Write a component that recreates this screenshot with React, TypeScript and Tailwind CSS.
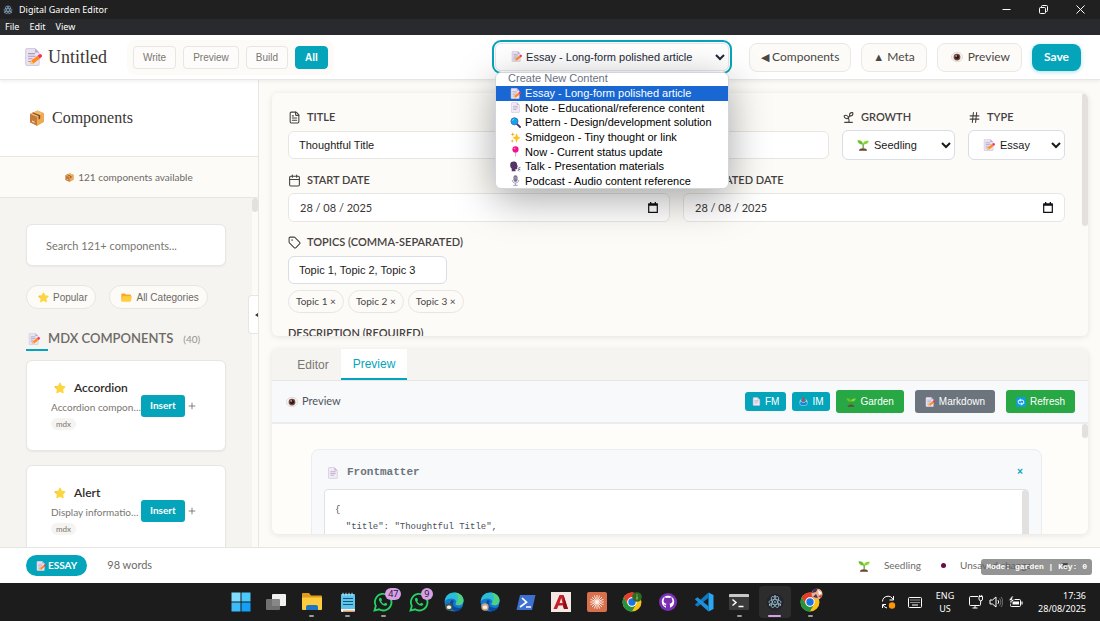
import { useState } from 'react';
import type { ReactNode } from 'react';
import { Calendar, FileText, Hash, Plus, Sprout, Tag } from 'lucide-react';

type IconProps = { className?: string };

const svgProps = { viewBox: '0 0 16 16', fill: 'none', 'aria-hidden': true } as const;

/* ---------- emoji style icons ---------- */

const Memo = ({ className = 'size-3' }: IconProps) => (
  <svg {...svgProps} className={className}>
    <path d="M2.5.5h7.3L13.5 4v10.5a1 1 0 0 1-1 1h-10a1 1 0 0 1-1-1v-13a1 1 0 0 1 1-1z" fill="#e9e3f1" stroke="#c9bdd6" strokeWidth=".7" />
    <path d="M9.8.5V4h3.7z" fill="#b9a9c9" />
    <path d="M3.7 5h6M3.7 7.3h6.5M3.7 9.6h4M3.7 11.9h3" stroke="#a998bb" strokeWidth=".9" />
    <path d="M5.6 14.2l.9-3 5.6-4.4 2 2.5-5.6 4.5z" fill="#ff8a1e" />
    <path d="M5.6 14.2l.9-3 2 2.6z" fill="#ffce7c" />
    <path d="M12.1 6.8l1.3-1a1.5 1.5 0 0 1 2 2.4l-1.3 1.1z" fill="#f8315f" />
  </svg>
);

const Page = ({ className = 'size-3' }: IconProps) => (
  <svg {...svgProps} className={className}>
    <path d="M3 .7h6.8L13.8 4.500v9.800a1 1 0 0 1-1 1H3a1 1 0 0 1-1-1V1.700a1 1 0 0 1 1-1z" fill="#f0eaf5" stroke="#cdbfd8" strokeWidth=".8" />
    <path d="M9.800.7v3.800h4z" fill="#c6b5d3" />
    <path d="M4.500 6.300h7M4.500 8.600h7M4.500 10.900h5" stroke="#b49fc4" strokeWidth="1" />
  </svg>
);

const Box = ({ className = 'size-3' }: IconProps) => (
  <svg {...svgProps} className={className}>
    <path d="M1 4l7.500-3.500L15 3.300v8.500L8 15.700 1 12.300z" fill="#d9964a" />
    <path d="M1 4l7.500-3.500L15 3.300 8 7z" fill="#f3b866" />
    <path d="M8 7l7-3.700v8.500L8 15.700z" fill="#f0a950" />
    <path d="M1 4l7 3v8.700l-7-3.400z" fill="#c27b3b" />
    <path d="M4.200 2.500l7 2.800v3.500l-1.600.7V6L2.900 3.100z" fill="#7a4a2f" />
    <path d="M3 10.500l2.500 1.100v1.300L3 11.800z" fill="#f5d9b5" />
  </svg>
);

const Star = ({ className = 'size-3' }: IconProps) => (
  <svg {...svgProps} className={className}>
    <path d="M7.200 1.200a.9.9 0 0 1 1.600 0l1.800 3.700 4 .6c.8.100 1 1 .5 1.500l-2.900 2.900.7 4.100c.1.700-.6 1.200-1.200.900L8 12.900l-3.700 2c-.6.300-1.300-.2-1.200-.9l.7-4.100L.9 7c-.5-.5-.3-1.400.5-1.500l4-.6z" fill="#fcd53f" />
    <path d="M3.800 9.900L.9 7c-.5-.5-.3-1.400.5-1.500l2-.3c-.2 2 0 3.500.4 4.700z" fill="#f9c23c" />
  </svg>
);

const Folder = ({ className = 'size-3' }: IconProps) => (
  <svg {...svgProps} className={className}>
    <path d="M.5 3a1 1 0 0 1 1-1h4l1.700 1.700h6.300a1 1 0 0 1 1 1V13H1.500a1 1 0 0 1-1-1z" fill="#f9a825" />
    <path d="M3 6h12a.8.8 0 0 1 .8 1l-1.400 6.200a1 1 0 0 1-1 .8H1.700a.9.9 0 0 1-.9-1.100l1.300-6.200A1 1 0 0 1 3 6z" fill="#fdcf3f" />
  </svg>
);

const Seedling = ({ className = 'size-3' }: IconProps) => (
  <svg {...svgProps} className={className}>
    <path d="M2.500 15.500c.4-2.300 2.500-3.300 5.500-3.300s5.100 1 5.500 3.300z" fill="#6d4534" />
    <path d="M8.200 13V6.500" stroke="#44911b" strokeWidth="1.500" />
    <path d="M8.200 7.300C4.500 8 1.500 6 .5 2c3.700-.8 7 .8 7.700 5.300z" fill="#6bbf2b" />
    <path d="M8 7c.2-3.600 3-5.400 7.700-4.600C15 6 12 7.800 8 7z" fill="#86d72f" />
  </svg>
);

const Eye = ({ className = 'size-3' }: IconProps) => (
  <svg {...svgProps} className={className}>
    <ellipse cx="8" cy="8" rx="7.500" ry="6.300" fill="#f4f1f3" stroke="#cfc9cd" strokeWidth=".7" />
    <circle cx="8" cy="8" r="4.500" fill="#7d4533" />
    <circle cx="8" cy="8" r="2.800" fill="#1c1c1c" />
    <circle cx="6.800" cy="6.500" r="1" fill="#fff" />
  </svg>
);

const Magnifier = ({ className = 'size-3' }: IconProps) => (
  <svg {...svgProps} className={className}>
    <path d="M10 10l4.500 4.500" stroke="#533566" strokeWidth="2.800" strokeLinecap="round" />
    <circle cx="6.500" cy="6.300" r="5.200" fill="#0fa5ee" stroke="#3f6fb8" strokeWidth="1.200" />
    <path d="M3.500 5.500a3.300 3.300 0 0 1 2.500-2.300" stroke="#b5e5ff" strokeWidth="1" />
  </svg>
);

const Sparkles = ({ className = 'size-3' }: IconProps) => (
  <svg {...svgProps} className={className}>
    <path d="M9.500 1.500l1.900 5.100 4.100 1.900-4.100 1.900-1.900 5.100-1.900-5.100-4.100-1.900 4.100-1.900z" fill="#fcc021" />
    <path d="M4 .5l.8 2.200 2.200.8-2.200.8L4 6.500l-.8-2.200L1 3.500l2.200-.8zM3.300 10.500l.7 1.800 1.800.7-1.800.7-.7 1.800-.7-1.800L.8 13l1.800-.7z" fill="#f9a72b" />
  </svg>
);

const Pin = ({ className = 'size-3' }: IconProps) => (
  <svg {...svgProps} className={className}>
    <path d="M8 8v7.500" stroke="#b9aec4" strokeWidth="1.200" />
    <circle cx="8" cy="5" r="4.500" fill="#f5108c" />
    <circle cx="6.600" cy="3.700" r="1.200" fill="#ff9dd0" />
  </svg>
);

const Talking = ({ className = 'size-3' }: IconProps) => (
  <svg {...svgProps} className={className}>
    <path d="M1.500 1.800C4 .2 8 .3 9.500 2.500c.8 1.200.6 2.300 1 3.500l1 1.700-1 .8.200 2.500c-.2 1-1.500.9-2.700.8v3.200H2.500V11C-.3 8.500-.3 3.800 1.500 1.800z" fill="#533566" />
    <path d="M12 10.500l3-1M12 12l3 .8M11.500 13.300l1.500 1.700" stroke="#533566" strokeWidth="1.200" />
  </svg>
);

const Mic = ({ className = 'size-3' }: IconProps) => (
  <svg {...svgProps} className={className}>
    <rect x="5" y=".5" width="6" height="9.500" rx="3" fill="#7e7488" />
    <path d="M5.200 3.500h5.600M5.200 5.800h5.600" stroke="#b6adc0" strokeWidth=".8" />
    <path d="M3.300 7.500c0 5.500 9.400 5.500 9.400 0M8 12v2.500M4.800 15h6.400" stroke="#9b8fae" strokeWidth="1.300" />
  </svg>
);

const Inbox = ({ className = 'size-3' }: IconProps) => (
  <svg {...svgProps} className={className}>
    <path d="M3.500 4.500A6 6 0 0 0 2 9.500M12.500 4.500A6 6 0 0 1 14 9.500" stroke="#dceefd" strokeWidth="1.500" />
    <path d="M1.500 8.500l3-.5 1.500 2h4l1.500-2 3 .5v3a3.500 3.500 0 0 1-3.500 3.500H5a3.500 3.500 0 0 1-3.500-3.500z" fill="#0f7fd6" stroke="#cfe6fb" />
    <path d="M6.800.5h2.400V5h2.200L8 9 4.600 5h2.200z" fill="#f8312f" />
  </svg>
);

const Reload = ({ className = 'size-3' }: IconProps) => (
  <svg {...svgProps} className={className}>
    <rect x=".5" y=".5" width="15" height="15" rx="2" fill="#0b9df0" />
    <path d="M12.300 11V7.500A2.500 2.500 0 0 0 9.800 5H5.500M3.700 5v3.500A2.500 2.500 0 0 0 6.200 11h4.300" stroke="#fff" strokeWidth="1.500" />
    <path d="M7.500 2.500L4.700 5l2.800 2.500zM8.500 8.500l2.800 2.500-2.800 2.500z" fill="#fff" />
  </svg>
);

/* ---------- electron atom, used in the title bar and the taskbar ---------- */

const Atom = ({ className = 'size-5' }: IconProps) => (
  <svg viewBox="0 0 20 20" fill="none" className={className} aria-hidden>
    <circle cx="10" cy="10" r="9.500" fill="#22252e" />
    <g stroke="#9fc9d8" strokeWidth=".8">
      <ellipse cx="10" cy="10" rx="6.800" ry="2.700" />
      <ellipse cx="10" cy="10" rx="6.800" ry="2.700" transform="rotate(60 10 10)" />
      <ellipse cx="10" cy="10" rx="6.800" ry="2.700" transform="rotate(120 10 10)" />
    </g>
    <circle cx="10" cy="10" r=".8" fill="#cfeaf3" />
    <circle cx="4.200" cy="13.200" r=".9" fill="#cfeaf3" />
    <circle cx="15.800" cy="13.200" r=".9" fill="#cfeaf3" />
    <circle cx="10" cy="3.500" r=".9" fill="#cfeaf3" />
  </svg>
);

/* ---------- window chrome ---------- */

const TitleBar = () => (
  <div className="flex h-[19px] shrink-0 items-center bg-[#202020] pl-[2px] text-white">
    <Atom className="size-3" />
    <span className="ml-[5px] font-['Noto_Sans',sans-serif] text-[9px]">Digital Garden Editor</span>
    <div className="ml-auto flex h-full items-center gap-7 pr-[15px]">
      <button aria-label="Minimize">
        <svg viewBox="0 0 9 9" className="size-[9px]" stroke="#fff" fill="none"><path d="M.5 4.500h8" /></svg>
      </button>
      <button aria-label="Restore">
        <svg viewBox="0 0 9 9" className="size-[9px]" stroke="#fff" fill="none">
          <rect x=".5" y="2.500" width="6" height="6" rx="1" />
          <path d="M2.500 2.500v-1a1 1 0 0 1 1-1h4a1 1 0 0 1 1 1v4a1 1 0 0 1-1 1h-1" />
        </svg>
      </button>
      <button aria-label="Close">
        <svg viewBox="0 0 9 9" className="size-[9px]" stroke="#fff" fill="none"><path d="M.5.5l8 8M8.500.5l-8 8" /></svg>
      </button>
    </div>
  </div>
);

const MenuBar = () => (
  <nav className="flex h-4 shrink-0 items-center gap-[10px] bg-[#292a2d] pl-[5px] font-['Noto_Sans',sans-serif] text-[9px] text-white">
    <button>File</button>
    <button>Edit</button>
    <button>View</button>
  </nav>
);

/* ---------- header ---------- */

const contentTypes = [
  { icon: Memo, label: 'Essay - Long-form polished article' },
  { icon: Page, label: 'Note - Educational/reference content' },
  { icon: Magnifier, label: 'Pattern - Design/development solution' },
  { icon: Sparkles, label: 'Smidgeon - Tiny thought or link' },
  { icon: Pin, label: 'Now - Current status update' },
  { icon: Talking, label: 'Talk - Presentation materials' },
  { icon: Mic, label: 'Podcast - Audio content reference' },
];

const ContentTypeSelect = () => (
  <div className="relative mr-[10px] w-[234px]">
    <select
      aria-label="Create new content"
      className="h-7 w-full rounded-md border border-gray-200 bg-white pl-[26px] font-['Liberation_Sans',sans-serif] text-[11px] text-gray-800 outline-2 outline-offset-1 outline-[#04a5bb]"
    >
      {contentTypes.map((t) => (
        <option key={t.label}>{t.label}</option>
      ))}
    </select>
    <Memo className="pointer-events-none absolute top-2 left-4 size-[11px]" />

    {/* open menu */}
    <div className="absolute top-[29px] left-0 z-20 w-full overflow-hidden rounded-md border border-gray-300 bg-white font-['Liberation_Sans',sans-serif] text-[11px] text-black shadow-[0_10px_40px_rgba(0,0,0,0.35)]">
      <p className="h-[13px] pl-3 leading-[11px] text-gray-500">Create New Content</p>
      <ul role="listbox" aria-label="Create New Content" className="flex h-[102px] flex-col">
        {contentTypes.map(({ icon: Icon, label }, i) => (
          <li
            key={label}
            role="option"
            aria-selected={i === 0}
            className="flex min-h-0 flex-1 items-center gap-1 pl-[14px] leading-[14px] whitespace-nowrap aria-selected:bg-[#1967d2] aria-selected:text-white"
          >
            <Icon className="size-[11px] shrink-0" />
            {label}
          </li>
        ))}
      </ul>
    </div>
  </div>
);

const modes = ['Write', 'Preview', 'Build', 'All'];

const Header = () => {
  const [mode, setMode] = useState('All');
  const action = 'flex h-[29px] items-center gap-[3px] rounded-lg border border-[#eae8e4] bg-[#fcfbf8] px-[11px] text-[12px] text-[#4a4744]';

  return (
    <header className="relative z-10 flex h-[45px] shrink-0 items-center border-b border-[#e8e6e3] bg-white pr-[19px] pl-6 shadow-[0_1px_4px_rgba(0,0,0,0.08)]">
      <Memo className="size-[18px]" />
      <h1 className="ml-[6px] font-['Liberation_Serif',serif] text-[18px] text-[#3a3735]">Untitled</h1>

      <div className="ml-5 flex items-center gap-[7px] rounded-lg bg-[#fcfbf8] p-[6px]">
        {modes.map((m) => (
          <button
            key={m}
            onClick={() => setMode(m)}
            aria-pressed={mode === m}
            className="h-[23px] rounded border border-[#e8e6e3] bg-[#fdfcfa] px-[9px] font-['Liberation_Sans',sans-serif] text-[10px] text-[#7a7672] aria-pressed:border-[#04a5bb] aria-pressed:bg-[#04a5bb] aria-pressed:font-bold aria-pressed:text-white"
          >
            {m}
          </button>
        ))}
      </div>

      <div className="ml-auto flex items-center gap-[10px]">
        <ContentTypeSelect />
        <button className={action}><span className="text-[11px]">◀</span>Components</button>
        <button className={action}><span className="text-[11px]">▲</span>Meta</button>
        <button className={action}><Eye className="mx-[2px] size-3" />Preview</button>
        <button className="h-[27px] rounded-lg bg-[#04a5bb] px-3 text-[12px] font-bold text-white shadow-[0_1px_4px_rgba(4,165,187,0.35)]">Save</button>
      </div>
    </header>
  );
};

/* ---------- sidebar ---------- */

const components = [
  { name: 'Accordion', description: 'Accordion component' },
  { name: 'Alert', description: 'Display information alert' },
];

const ComponentCard = ({ name, description }: { name: string; description: string }) => (
  <li className="flex h-[91px] shrink-0 items-center rounded-md border border-[#e8e6e3] bg-white pl-6 shadow-[0_1px_2px_rgba(0,0,0,0.06)]">
    <div className="w-[90px] pb-[3px]">
      <h3 className="flex items-center gap-2 pl-[3px] text-[12px] leading-5 font-semibold text-[#2f2c2a]">
        <Star />
        {name}
      </h3>
      <p className="truncate text-[10px] leading-[18px] text-[#7a7672]">{description}</p>
      <span className="mt-[2px] block w-fit rounded-full bg-[#f5f4f1] px-[5px] text-[8px] leading-3 text-[#7a7672]">mdx</span>
    </div>
    <button className="h-[22px] rounded-[3px] bg-[#04a5bb] px-[9px] text-[10px] font-bold text-white">Insert</button>
    <button aria-label={`Add ${name}`} className="ml-[2px] text-[#6d6a67]"><Plus size={10} strokeWidth={2} /></button>
  </li>
);

const Sidebar = () => {
  const pill = "flex h-6 items-center gap-1 rounded-full border border-[#e8e6e3] bg-[#fcfbf8] pr-2 pl-[11px] font-['Liberation_Sans',sans-serif] text-[10px] text-[#6d6a67]";

  return (
    <aside className="relative flex w-[259px] shrink-0 flex-col overflow-hidden border-r border-[#e8e6e3]">
      <div className="flex h-[77px] shrink-0 items-center gap-[7px] border-b border-[#e8e6e3] bg-white pl-[29px]">
        <Box className="size-4" />
        <h2 className="font-['Liberation_Serif',serif] text-[16px] text-[#3a3735]">Components</h2>
      </div>
      <div className="flex h-[41px] shrink-0 items-center justify-center gap-1 border-b border-[#e8e6e3] bg-[#fcfbf8] text-[10px] text-[#6d6a67]">
        <Box className="size-[9px]" />
        121 components available
      </div>

      <div className="flex min-h-0 flex-1">
        <div className="min-w-0 flex-1 overflow-hidden bg-[#f5f4f1] pt-[26px] pr-[26px] pl-[26px]">
          <input
            aria-label="Search components"
            placeholder="Search 121+ components..."
            className="h-[42px] w-full rounded-md border border-[#e8e6e3] bg-white px-[19px] text-[11px] shadow-[0_1px_2px_rgba(0,0,0,0.05)] placeholder:text-[#7a7672]"
          />
          <div className="mt-[19px] flex gap-[13px]">
            <button className={pill}><Star className="size-[11px]" />Popular</button>
            <button className={pill}><Folder className="size-[11px]" />All Categories</button>
          </div>
          <div className="relative mt-[18px] flex h-6 items-center text-[13px] font-semibold text-[#6d6a67]">
            <Memo className="ml-[2px] size-3" />
            <h2 className="ml-2">MDX COMPONENTS</h2>
            <span className="ml-[10px] text-[10px] font-normal text-[#96928e]">(40)</span>
            <span className="absolute bottom-0 left-0 h-[2px] w-[22px] bg-[#04a5bb]" />
          </div>
          <ul className="mt-[9px] flex flex-col gap-[14px]">
            {components.map((c) => <ComponentCard key={c.name} {...c} />)}
          </ul>
        </div>
        <div className="w-[6px] bg-[#fcfbf8]">
          <div className="h-[14px] rounded-full bg-[#e3e0dd]" />
        </div>
      </div>

      {/* collapse handle, half hidden by the panel edge */}
      <button aria-label="Collapse sidebar" className="absolute top-[215px] right-0 h-[39px] w-[10px] overflow-hidden rounded-l-sm border border-r-0 border-[#e8e6e3] bg-white text-[#3a3735]">
        <svg viewBox="0 0 3 4" className="ml-auto h-1 w-[3px]"><path d="M0 2l3-2v4z" fill="currentColor" /></svg>
      </button>
    </aside>
  );
};

/* ---------- metadata form ---------- */

const FieldLabel = ({ htmlFor, icon, children }: { htmlFor: string; icon?: ReactNode; children: ReactNode }) => (
  <label htmlFor={htmlFor} className="flex h-4 items-center gap-[6px] text-[11px] font-semibold whitespace-nowrap text-[#45413e]">
    {icon}
    {children}
  </label>
);

const DateField = ({ id, label }: { id: string; label: string }) => (
  <div className="min-w-0 flex-1">
    <FieldLabel htmlFor={id} icon={<Calendar size={13} />}>{label}</FieldLabel>
    <div className="relative mt-[5px]">
      <input
        id={id}
        defaultValue="28 / 08 / 2025"
        className="h-[29px] w-full rounded-md border border-[#e8e6e3] bg-white px-[11px] text-[11px] text-[#3a3735]"
      />
      <svg viewBox="0 0 10 11" className="absolute top-[9px] right-3 h-[11px] w-[10px]" aria-hidden>
        <path d="M.7 2h8.600v8.300H.7z" fill="none" stroke="#111" strokeWidth="1.200" />
        <path d="M.5 1.500h9v2.200h-9zM2 0h1.300v2H2zM6.700 0H8v2H6.700z" fill="#111" />
      </svg>
    </div>
  </div>
);

const topics = ['Topic 1', 'Topic 2', 'Topic 3'];

const MetadataForm = () => {
  const control = "w-full rounded-md border bg-white font-['Liberation_Sans',sans-serif] text-[11px] text-[#1c1a19]";

  return (
    <section className="flex h-[243px] shrink-0 overflow-hidden rounded-md bg-[#fcfbf8] shadow-[0_1px_6px_rgba(0,0,0,0.1)]">
      <form className="min-w-0 flex-1 pt-4 pr-[17px] pl-4">
        <div className="flex gap-[13px]">
          <div className="min-w-0 flex-1">
            <FieldLabel htmlFor="title" icon={<FileText size={13} />}>TITLE</FieldLabel>
            <input id="title" defaultValue="Thoughtful Title" className={`${control} mt-[6px] h-7 border-[#e8e6e3] px-[10px]`} />
          </div>
          <div className="w-[113px]">
            <FieldLabel htmlFor="growth" icon={<Sprout size={13} />}>GROWTH</FieldLabel>
            <div className="relative mt-[5px]">
              <select id="growth" className={`${control} h-[30px] border-[#d8dde6] pl-[27px]`}>
                <option>Seedling</option>
                <option>Budding</option>
                <option>Evergreen</option>
              </select>
              <Seedling className="pointer-events-none absolute top-[9px] left-[15px] size-3" />
            </div>
          </div>
          <div className="w-[97px]">
            <FieldLabel htmlFor="type" icon={<Hash size={13} />}>TYPE</FieldLabel>
            <div className="relative mt-[5px]">
              <select id="type" className={`${control} h-[30px] border-[#d8dde6] pl-[27px]`}>
                <option>Essay</option>
                <option>Note</option>
                <option>Pattern</option>
              </select>
              <Memo className="pointer-events-none absolute top-[9px] left-[15px] size-3" />
            </div>
          </div>
        </div>

        <div className="mt-3 flex gap-[13px]">
          <DateField id="start-date" label="START DATE" />
          <DateField id="updated-date" label="UPDATED DATE" />
        </div>

        <div className="mt-3">
          <FieldLabel htmlFor="topics" icon={<Tag size={13} />}>TOPICS (COMMA-SEPARATED)</FieldLabel>
          <div className="mt-[6px] w-[159px]">
            <input id="topics" defaultValue="Topic 1, Topic 2, Topic 3" className={`${control} h-7 border-[#d8dde6] px-[10px]`} />
          </div>
          <div className="mt-[6px] flex gap-1">
            {topics.map((t) => (
              <button key={t} type="button" className="h-[23px] rounded-full border border-[#e8e6e3] px-[7px] text-[10px] text-[#4a4744]">
                {t} ×
              </button>
            ))}
          </div>
        </div>

        <div className="mt-3">
          <FieldLabel htmlFor="description">DESCRIPTION (REQUIRED)</FieldLabel>
          <textarea id="description" className={`${control} mt-[5px] h-16 border-[#e8e6e3]`} />
        </div>
      </form>
      <div className="w-[6px]">
        <div className="h-[133px] rounded-full bg-[#e3e0dd]" />
      </div>
    </section>
  );
};

/* ---------- editor / preview ---------- */

const frontmatter = `{
  "title": "Thoughtful Title",
  "startDate": "2025-08-28",
  "updated": "2025-08-28"
}`;

const PreviewPanel = () => {
  const small = 'flex h-[19px] items-center gap-1 rounded-[3px] bg-[#04a5bb] px-[7px]';
  const large = 'flex h-[23px] items-center gap-1 rounded-[3px] px-[10px]';

  return (
    <section className="mt-[13px] flex min-h-0 flex-1 flex-col overflow-hidden rounded-md bg-[#fefdf9] font-['Liberation_Sans',sans-serif] shadow-[0_1px_6px_rgba(0,0,0,0.1)]">
      <div role="tablist" className="flex h-8 shrink-0 border-b border-[#e8e6e3] bg-[#f5f4f1] pl-[13px] text-[12px]">
        <button role="tab" aria-selected={false} className="w-14 text-[#7a7672]">Editor</button>
        <button role="tab" aria-selected className="w-[66px] border-b-2 border-[#04a5bb] bg-white text-[#04a5bb]">Preview</button>
      </div>

      <div className="flex h-[43px] shrink-0 items-center border-b-2 border-[#e9ecf0] bg-[#f8f9fb] pr-[13px] pl-[14px]">
        <Eye className="size-3" />
        <span className="ml-1 font-[Lato,sans-serif] text-[11px] text-[#4f555b]">Preview</span>
        <div className="ml-auto flex items-center text-[10px] text-white">
          <button className={small}><Page className="size-[9px]" />FM</button>
          <button className={`${small} ml-[6px]`}><Inbox className="size-[9px]" />IM</button>
          <button className={`${large} ml-[6px] bg-[#28a745]`}><Seedling className="size-[10px]" />Garden</button>
          <button className={`${large} ml-[11px] bg-[#6c757d]`}><Memo className="size-[10px]" />Markdown</button>
          <button className={`${large} ml-[11px] bg-[#28a745]`}><Reload className="size-[10px]" />Refresh</button>
        </div>
      </div>

      <div className="flex min-h-0 flex-1">
        <div className="min-w-0 flex-1 overflow-hidden pt-[25px] pr-10 pl-[39px]">
          <div className="rounded-lg border border-[#e9ecf0] bg-[#f8f9fb] px-3 font-['Liberation_Mono',monospace]">
            <div className="flex h-[39px] items-center pt-[6px] pr-[6px] pl-[3px]">
              <Page className="size-3" />
              <h3 className="ml-2 text-[11px] font-bold text-[#6c757d]">Frontmatter</h3>
              <button aria-label="Hide frontmatter" className="ml-auto text-[10px] font-bold text-[#04a5bb]">×</button>
            </div>
            <div className="flex h-40 rounded-sm border border-[#dee2e6] bg-white">
              <pre className="min-w-0 flex-1 pt-3 pl-[10px] font-['Liberation_Mono',monospace] text-[9px] leading-[17px] text-[#495057]">{frontmatter}</pre>
              <div className="w-[6px] rounded-t-full bg-[#e3e0dd]" />
            </div>
          </div>
        </div>
        <div className="w-[6px]">
          <div className="h-[14px] rounded-full bg-[#e3e0dd]" />
        </div>
      </div>
    </section>
  );
};

const StatusBar = () => (
  <footer className="relative flex h-9 shrink-0 items-center border-t border-[#e8e6e3] bg-white pr-[30px] pl-[26px] text-[10px] text-[#6d6a67]">
    <span className="flex h-[21px] items-center gap-[2px] rounded-full bg-[#04a5bb] px-[10px] font-bold text-white">
      <Memo className="size-[10px]" />ESSAY
    </span>
    <span className="ml-5 text-[11px]">98 words</span>
    <div className="ml-auto flex items-center">
      <Seedling />
      <span className="ml-[14px]">Seedling</span>
      <span className="ml-5 size-[5px] rounded-full bg-[#6b0a4a]" />
      <span className="ml-[14px]">Unsaved changes</span>
      <span className="ml-6 text-[10px] text-black">▼</span>
    </div>
    <div className="absolute right-2 bottom-2 rounded-[3px] bg-[#5a5a5a]/65 px-[5px] font-['Liberation_Mono',monospace] text-[8px] leading-4 font-bold whitespace-pre text-white">
      Mode: garden | Key: 0
    </div>
  </footer>
);

/* ---------- windows taskbar ---------- */

const AppIcon = ({ children }: { children: ReactNode }) => (
  <svg viewBox="0 0 20 20" fill="none" className="size-5" aria-hidden>{children}</svg>
);

const Windows = () => (
  <AppIcon>
    <path d="M.5.5h9v9h-9z" fill="#7fdcff" />
    <path d="M10.500.5h9v9h-9z" fill="#4cc8fb" />
    <path d="M.5 10.500h9v9h-9z" fill="#3dbaf8" />
    <path d="M10.500 10.500h9v9h-9z" fill="#12a1f4" />
  </AppIcon>
);

const TaskView = () => (
  <AppIcon>
    <rect x="6" y="2" width="14" height="12" rx="1" fill="#f1f1f1" />
    <rect x="0" y="7" width="14" height="11" rx="1" fill="#7b7b7b" fillOpacity=".9" />
  </AppIcon>
);

const Explorer = () => (
  <AppIcon>
    <path d="M0 2a1 1 0 0 1 1-1h6l2 2.500h10a1 1 0 0 1 1 1V17H0z" fill="#e09b1a" />
    <path d="M0 5.500h20V17a1 1 0 0 1-1 1H1a1 1 0 0 1-1-1z" fill="#fccb3e" />
    <path d="M4 18v-3a2 2 0 0 1 2-2h8a2 2 0 0 1 2 2v3z" fill="#1d75c4" />
  </AppIcon>
);

const Notepad = () => (
  <AppIcon>
    <rect x="3" y="2" width="14" height="17" rx="1" fill="#5fc4e8" />
    <path d="M3 17h14v2a1 1 0 0 1-1 1H4a1 1 0 0 1-1-1z" fill="#f3f3f3" />
    <path d="M5 19.200h12" stroke="#d9772c" />
    <path d="M5 6.500h10M5 9.500h10M5 12.500h10" stroke="#12597f" strokeWidth="1.200" />
    <path d="M5 .8v3M8 .8v3M11 .8v3M14 .8v3" stroke="#b9ecff" />
  </AppIcon>
);

const WhatsApp = ({ count }: { count: number }) => (
  <span className="relative">
    <AppIcon>
      <path d="M1.500 18.500l1.300-4.600A8.300 8.300 0 1 1 6 17.300z" stroke="#25d366" strokeWidth="1.800" />
      <path d="M6.800 5.800c-1.300 1-1 3 .8 5.200s4.200 3.400 5.800 2.400c.8-.5 1-1.200.8-1.600l-2-1-1.200 1.100c-1.400-.6-2.300-1.500-2.800-2.700l.8-1-.8-2.300z" fill="#25d366" />
    </AppIcon>
    <span className="absolute -top-1 left-3 min-w-3 rounded-full bg-[#d9a0ea] px-[3px] text-center text-[9px] leading-3 text-[#1c1c1c]">{count}</span>
  </span>
);

const Edge = ({ face }: { face: string }) => (
  <AppIcon>
    <circle cx="10" cy="10" r="9.500" fill="#1479cf" />
    <path d="M.6 9.500C1.500 3.500 5.500.5 10 .5c5.500 0 9.500 3.800 9.500 7.800 0 3-2.200 5-5 5-2 0-3.200-.8-2.800-1.700 1.500-2-.2-5.100-4-5.100-3 0-5.800 1.200-7.100 3z" fill="#2cbdd6" />
    <path d="M11 .6c5 .4 8.500 4 8.500 7.700 0 3-2.200 5-5 5-2 0-3.200-.8-2.800-1.700C15 8 14.500 3 11 .6z" fill="#4fd182" />
    <path d="M7.500 8c-3 2.800-1.500 9.500 4.500 11.300 3-.3 5.300-2 6.700-4.300-5 2.300-9.700 0-9.700-3.500 0-.9.600-1.700 1-2.500-.7-.7-1.500-1-2.500-1z" fill="#0d4a9c" />
    <circle cx="5" cy="15" r="3.700" fill={face} />
    <path d="M2.800 14.500c.8-1.500 3.600-1.500 4.400 0v1.800c-1 .8-3.400.8-4.400 0z" fill="#f5efe6" />
  </AppIcon>
);

const PowerShell = () => (
  <AppIcon>
    <path d="M4 3h15.500L16 18H.5z" fill="#3e70d1" />
    <path d="M6 6l4.500 4.200L4 15M10 15h5" stroke="#fff" strokeWidth="1.700" />
  </AppIcon>
);

const AutoCad = () => (
  <AppIcon>
    <rect width="20" height="20" fill="#f5e9e6" />
    <path d="M2.500 17L8.500 3h4l4.500 14h-4l-1-3.500H7.500L6 17zM8.500 11h3L10.300 6z" fill="#c41f2b" />
    <path d="M12.500 3L17 17h-4l-1-3.500.5-2.500z" fill="#8d1018" />
  </AppIcon>
);

const Claude = () => (
  <AppIcon>
    <rect width="20" height="20" rx="2" fill="#d9704d" />
    <path d="M10 3v14M3 10h14M5 5l10 10M15 5L5 15M7.300 3.500l5.400 13M12.700 3.500l-5.400 13M3.500 7.300l13 5.400M3.500 12.700l13-5.400" stroke="#fff4ec" strokeWidth=".9" />
  </AppIcon>
);

const Chrome = ({ children }: { children: ReactNode }) => (
  <svg viewBox="0 0 20 20" fill="none" className="size-5 overflow-visible" aria-hidden>
    <circle cx="10" cy="10" r="9.500" fill="#fbc116" />
    <path d="M1.800 5.200A9.500 9.500 0 0 1 18.200 5.200H10a4.800 4.800 0 0 0-4.200 7.200z" fill="#e33b2e" />
    <path d="M1.800 5.200A9.500 9.500 0 0 0 9.900 19.500L14 12.500a4.800 4.800 0 0 1-8.200 0z" fill="#229342" />
    <circle cx="10" cy="10" r="4.700" fill="#fff" />
    <circle cx="10" cy="10" r="3.700" fill="#1a73e8" />
    {children}
  </svg>
);

const GitHub = () => (
  <AppIcon>
    <circle cx="10" cy="10" r="9" fill="#7b2fb5" />
    <path d="M10 3.800c-3.600 0-6.200 2.500-6.200 6 0 2.800 1.700 5 4.200 5.900v-2c-1.500.3-2-.4-2.300-1.200.9 0 1.300.8 2.300.4.100-.5.300-.8.600-1.100-2-.3-3-1.200-3-3 0-.8.300-1.400.7-1.800-.1-.6-.1-1.200.1-1.700.7 0 1.400.3 1.800.7a6 6 0 0 1 3.600 0c.5-.4 1.100-.7 1.800-.7.2.6.200 1.100.1 1.700.4.500.7 1 .7 1.800 0 1.800-1.100 2.700-3 3 .4.400.6 1 .6 1.700v2.200c2.500-.8 4.200-3.100 4.200-5.900 0-3.500-2.600-6-6.200-6z" fill="#fff" />
  </AppIcon>
);

const VsCode = () => (
  <AppIcon>
    <path d="M14.500.5L19.500 3v14l-5 2.500z" fill="#2aa7f2" />
    <path d="M14.500.5v5.200L3.500 14.700.8 12.800z" fill="#1178c2" />
    <path d="M14.500 19.500v-5.200L3.500 5.300.8 7.200z" fill="#1d91dc" />
  </AppIcon>
);

const Terminal = () => (
  <AppIcon>
    <rect x="0" y="2" width="20" height="16" rx="1" fill="#3b3b3b" />
    <path d="M0 3a1 1 0 0 1 1-1h18a1 1 0 0 1 1 1v2H0z" fill="#c9c9c9" />
    <path d="M3.500 7.500l3.500 3-3.500 3M9.500 14.500h5" stroke="#fff" strokeWidth="1.500" />
  </AppIcon>
);

const apps: { name: string; icon: ReactNode; running?: boolean; active?: boolean }[] = [
  { name: 'Start', icon: <Windows /> },
  { name: 'Task View', icon: <TaskView /> },
  { name: 'File Explorer', icon: <Explorer />, running: true },
  { name: 'Notepad', icon: <Notepad />, running: true },
  { name: 'WhatsApp', icon: <WhatsApp count={47} />, running: true },
  { name: 'WhatsApp Business', icon: <WhatsApp count={9} /> },
  { name: 'Edge', icon: <Edge face="#3f5a4a" /> },
  { name: 'Edge Personal', icon: <Edge face="#c9a483" /> },
  { name: 'PowerShell', icon: <PowerShell /> },
  { name: 'AutoCAD', icon: <AutoCad /> },
  { name: 'Claude', icon: <Claude /> },
  {
    name: 'Chrome',
    icon: (
      <Chrome>
        <circle cx="15" cy="5" r="4.800" fill="#2f6b22" />
        <path d="M15 4.500v3M15 2.500v1" stroke="#b9d9a9" />
      </Chrome>
    ),
  },
  { name: 'GitHub Desktop', icon: <GitHub /> },
  { name: 'VS Code', icon: <VsCode /> },
  { name: 'Terminal', icon: <Terminal />, running: true },
  { name: 'Digital Garden Editor', icon: <Atom className="size-[18px]" />, active: true },
  {
    name: 'Chrome Profile',
    icon: (
      <Chrome>
        <circle cx="17" cy="2" r="5.500" fill="#e9b08c" />
        <path d="M12 1c1-4 4-5 6-5l-2 4zM13 5l3-3 2 4z" fill="#4b2a55" />
        <path d="M18-2l4 3-3 2z" fill="#fff" />
        <path d="M18 4l4-1-1 3z" fill="#c33f2b" />
      </Chrome>
    ),
    running: true,
  },
];

const Taskbar = () => (
  <div className="flex h-[38px] shrink-0 items-center bg-[#1c1c1c] font-['Noto_Sans',sans-serif] text-white">
    <div className="flex-1" />
    <div className="flex h-full w-[605px] items-center">
      {apps.map((app) => (
        <button key={app.name} aria-label={app.name} className="relative flex h-full flex-1 items-center justify-center">
          {app.active && <span className="absolute inset-x-[2px] inset-y-[3px] rounded bg-[#2d2d2d]" />}
          <span className="relative flex">{app.icon}</span>
          {app.running && <span className="absolute bottom-1 h-[2px] w-[5px] rounded-full bg-[#9a9a9a]" />}
          {app.active && <span className="absolute bottom-1 h-[2px] w-[13px] rounded-full bg-[#d9a0ea]" />}
        </button>
      ))}
    </div>
    <div className="flex w-[272px] items-center pr-[14px] pl-[53px]">
      <svg viewBox="0 0 15 15" fill="none" className="size-[15px]" stroke="#fff" aria-hidden>
        <path d="M1.500 6.500A5.500 5.500 0 0 1 12 4.500M12.500 1v4h-4M1.500 13V9.500h3.500M2 10a5.500 5.500 0 0 0 4 3" />
        <circle cx="11" cy="10.500" r="3.200" fill="#ff9800" stroke="none" />
      </svg>
      <svg viewBox="0 0 14 11" fill="none" className="ml-3 h-[11px] w-[14px]" stroke="#fff" aria-hidden>
        <rect x=".5" y=".5" width="13" height="10" rx="1" />
        <path d="M2.500 3h9M2.500 5.500h9" strokeDasharray="1 1" />
        <path d="M4 8h6" />
      </svg>
      <div className="ml-[13px] w-5 text-center text-[9px] leading-[13px]">ENG<br />US</div>
      <svg viewBox="0 0 14 14" fill="none" className="ml-[14px] size-[14px]" stroke="#fff" aria-hidden>
        <path d="M9 1.500H1.500a1 1 0 0 0-1 1v7a1 1 0 0 0 1 1h9a1 1 0 0 0 1-1V8M6 10.500V13M3.500 13h5" />
        <path d="M10 1.500h3.500V4a1.700 1.700 0 0 1-3.500 0zM11.700 6v2M10.700 0v1.500M12.700 0v1.500" />
      </svg>
      <svg viewBox="0 0 14 12" fill="none" className="ml-[6px] h-3 w-[14px]" stroke="#fff" aria-hidden>
        <path d="M1 4v4h2.500L7 11V1L3.500 4zM9 4.200a3 3 0 0 1 0 3.600" />
        <path d="M10.500 2.500a5 5 0 0 1 0 7M12 1a7.500 7.500 0 0 1 0 10" stroke="#777" />
      </svg>
      <svg viewBox="0 0 15 12" fill="none" className="ml-[5px] h-3 w-[15px]" aria-hidden>
        <rect x="2.500" y="3.500" width="10" height="7" rx="1" stroke="#fff" />
        <path d="M4.500 5.500h6.500v3H4.500z" fill="#fff" />
        <path d="M14 5.500v3" stroke="#fff" strokeWidth="1.200" />
        <path d="M4 0L.5 4.500h2.800L2 8.500 6.500 3.500H4L5.500 0z" fill="#fff" stroke="#1c1c1c" strokeWidth=".7" />
      </svg>
      <div className="ml-auto text-right text-[9px] leading-[13px]">17:36<br />28/08/2025</div>
    </div>
  </div>
);

export default function App() {
  return (
    <div className="flex h-screen flex-col overflow-hidden bg-[#fcfbf8] font-[Lato,sans-serif]">
      <TitleBar />
      <MenuBar />
      <Header />
      <div className="flex min-h-0 flex-1">
        <Sidebar />
        <main className="flex min-w-0 flex-1 flex-col py-[13px] pr-3 pl-[13px]">
          <MetadataForm />
          <PreviewPanel />
        </main>
      </div>
      <StatusBar />
      <Taskbar />
    </div>
  );
}
